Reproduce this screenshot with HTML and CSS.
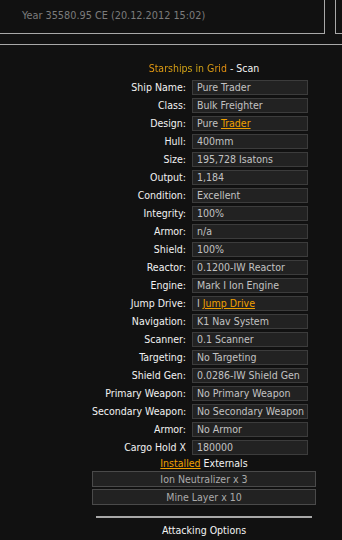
FILE: index.html
```html
<!DOCTYPE html>
<html>
<head>
<meta charset="utf-8">
<link rel="stylesheet" href="styles.css">
</head>
<body>
<div class="header">
  <div class="hbox-left"><span class="year">Year 35580.95 CE (20.12.2012 15:02)</span></div>
  <div class="hbox-right"></div>
</div>
<div class="rule-top"></div>
<div class="content">
  <div class="title"><span class="grad">Starships in Grid</span> - Scan</div>
  <div class="grid">
    <div class="lbl">Ship Name:</div><div class="val">Pure Trader</div>
    <div class="lbl">Class:</div><div class="val">Bulk Freighter</div>
    <div class="lbl">Design:</div><div class="val">Pure <a class="link">Trader</a></div>
    <div class="lbl">Hull:</div><div class="val">400mm</div>
    <div class="lbl">Size:</div><div class="val">195,728 Isatons</div>
    <div class="lbl">Output:</div><div class="val">1,184</div>
    <div class="lbl">Condition:</div><div class="val">Excellent</div>
    <div class="lbl">Integrity:</div><div class="val">100%</div>
    <div class="lbl">Armor:</div><div class="val">n/a</div>
    <div class="lbl">Shield:</div><div class="val">100%</div>
    <div class="lbl">Reactor:</div><div class="val">0.1200-IW Reactor</div>
    <div class="lbl">Engine:</div><div class="val">Mark I Ion Engine</div>
    <div class="lbl">Jump Drive:</div><div class="val">I <a class="link">Jump Drive</a></div>
    <div class="lbl">Navigation:</div><div class="val">K1 Nav System</div>
    <div class="lbl">Scanner:</div><div class="val">0.1 Scanner</div>
    <div class="lbl">Targeting:</div><div class="val">No Targeting</div>
    <div class="lbl">Shield Gen:</div><div class="val">0.0286-IW Shield Gen</div>
    <div class="lbl">Primary Weapon:</div><div class="val">No Primary Weapon</div>
    <div class="lbl">Secondary Weapon:</div><div class="val">No Secondary Weapon</div>
    <div class="lbl">Armor:</div><div class="val">No Armor</div>
    <div class="lbl">Cargo Hold X</div><div class="val">180000</div>
  </div>
  <div class="ext-title"><a class="link">Installed</a> Externals</div>
  <div class="ext-list">
    <div class="ext">Ion Neutralizer x 3</div>
    <div class="ext">Mine Layer x 10</div>
  </div>
  <div class="rule-bottom"></div>
  <div class="attack">Attacking Options</div>
</div>
</body>
</html>
```
FILE: styles.css
```css
html, body {
  margin: 0;
  padding: 0;
  background: #111111;
  height: 540px;
  overflow: hidden;
}
body {
  font-family: "DejaVu Sans Condensed", "DejaVu Sans", sans-serif;
  font-size: 10.5px;
  color: #f0f0f0;
}
.header {
  display: flex;
  height: 34px;
}
.hbox-left {
  flex: 0 0 325px;
  box-sizing: border-box;
  border-right: 1px solid #a8a8a8;
  border-bottom: 1px solid #a8a8a8;
  padding-left: 22px;
  padding-top: 9px;
}
.year {
  color: #7c7c7c;
  font-size: 10.8px;
}
.hbox-right {
  margin-left: 10px;
  flex: 1;
  border-left: 1px solid #a8a8a8;
  border-bottom: 1px solid #a8a8a8;
}
.rule-top {
  margin-top: 10px;
  height: 1px;
  background: #a8a8a8;
}
.content {
  margin-left: 92px;
  width: 224px;
  padding-top: 17px;
}
.title {
  text-align: center;
  color: #f4f4f4;
  height: 13px;
  line-height: 13px;
}
.grad {
  color: #e8a010;
  background: linear-gradient(90deg, #eb9a10, #d8b018 60%, #eb9010);
  -webkit-background-clip: text;
  background-clip: text;
  -webkit-text-fill-color: transparent;
}
.link {
  color: #f0a000;
  text-decoration: underline;
}
.grid {
  margin-top: 5px;
  display: grid;
  grid-template-columns: 94px 116px;
  column-gap: 6px;
  row-gap: 3px;
}
.lbl {
  text-align: right;
  line-height: 15px;
  height: 15px;
  white-space: nowrap;
  color: #f2f2f2;
}
.val {
  box-sizing: border-box;
  height: 15px;
  line-height: 13px;
  background: #222222;
  border: 1px solid #3c3c3c;
  padding-left: 4px;
  color: #c2c2c2;
  white-space: nowrap;
  overflow: hidden;
}
.ext-title {
  text-align: center;
  margin-top: 1px;
  line-height: 15px;
  height: 15px;
  color: #f2f2f2;
}
.ext-list {
  display: flex;
  flex-direction: column;
  gap: 2px;
}
.ext {
  box-sizing: border-box;
  height: 16px;
  line-height: 14px;
  background: #222222;
  border: 1px solid #4a4a4a;
  text-align: center;
  color: #ababab;
}
.rule-bottom {
  margin: 11px 4px 0 4px;
  height: 2px;
  background: #a8a8a8;
}
.attack {
  text-align: center;
  margin-top: 5px;
  line-height: 14px;
  color: #f4f4f4;
}
```
